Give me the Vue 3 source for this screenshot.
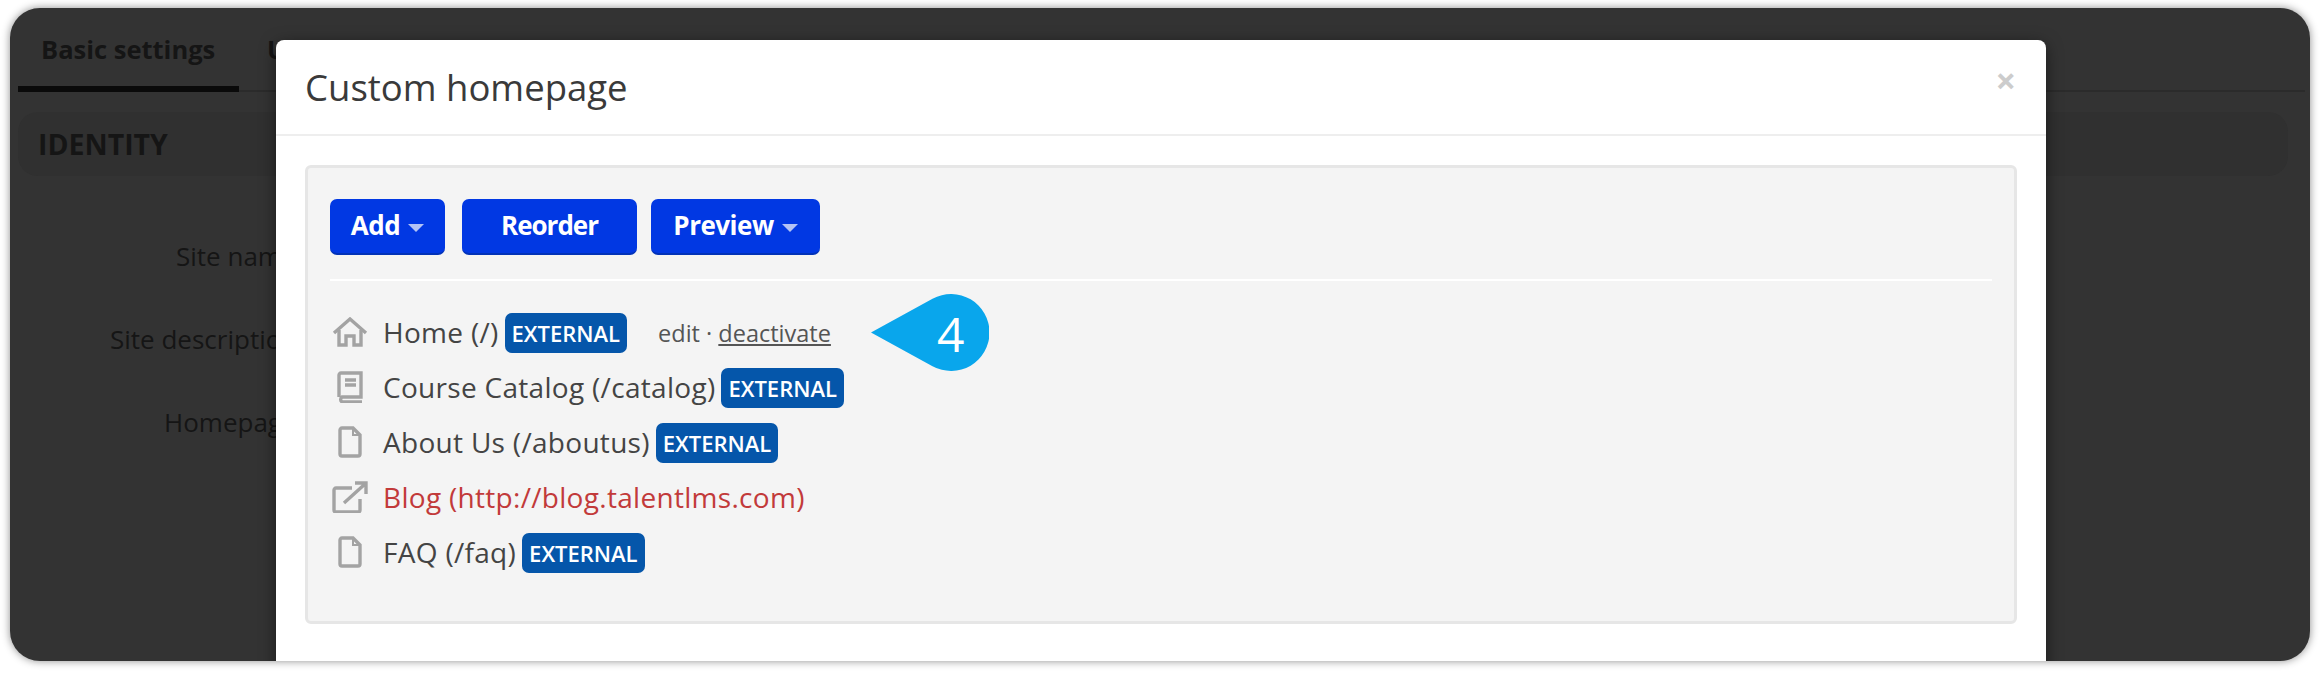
<template>
  <div class="page">
    <div class="frame">
      <div class="bg">
        <div class="tabs">
          <div class="tab active">Basic settings</div>
          <div class="tab">Users</div>
        </div>
        <div class="section">IDENTITY</div>
        <div class="form">
          <div v-for="label in labels" :key="label" class="form-label">{{ label }}</div>
        </div>
      </div>

      <div class="modal">
        <div class="modal-head">
          <span class="modal-title">Custom homepage</span>
          <span class="close">×</span>
        </div>
        <div class="modal-body">
          <div class="well">
            <div class="toolbar">
              <button class="btn btn-add">Add<i class="caret"></i></button>
              <button class="btn btn-reorder">Reorder</button>
              <button class="btn btn-preview">Preview<i class="caret"></i></button>
            </div>
            <ul class="pages">
              <li v-for="p in pages" :key="p.name" class="page-row">
                <span class="icon">
                  <svg v-if="p.icon === 'home'" width="36" height="30" viewBox="0 0 36 30" fill="none" stroke="#a3a3a3" stroke-width="3.4">
                    <path d="M2 16 18 2l16 14" />
                    <path d="M7 13v15h7v-9h8v9h7V13" />
                  </svg>
                  <svg v-else-if="p.icon === 'book'" width="28" height="32" viewBox="0 0 28 32" fill="none" stroke="#a3a3a3" stroke-width="3.4">
                    <path d="M3 26V4a2 2 0 0 1 2-2h20v24H6a3 3 0 0 0 0 5h20" />
                    <path d="M9 9h11M9 14h11" />
                  </svg>
                  <svg v-else-if="p.icon === 'file'" width="24" height="32" viewBox="0 0 24 32" fill="none" stroke="#a3a3a3" stroke-width="3.4">
                    <path d="M15 2H4a2 2 0 0 0-2 2v24a2 2 0 0 0 2 2h16a2 2 0 0 0 2-2V9z" />
                    <path d="M15 2v7h7" stroke-width="2" />
                  </svg>
                  <svg v-else width="36" height="32" viewBox="0 0 36 32" fill="none" stroke="#a3a3a3" stroke-width="3.4">
                    <path d="M20 7H4a2 2 0 0 0-2 2v20a2 2 0 0 0 2 2h22a2 2 0 0 0 2-2V18" />
                    <path d="M12 22 33 3M23 2h11v11" />
                  </svg>
                </span>
                <span class="name" :class="{ red: p.red }">{{ p.name }}</span>
                <span v-if="!p.red" class="badge">EXTERNAL</span>
                <span v-if="p.actions" class="actions">edit · <u>deactivate</u></span>
                <span v-if="p.actions" class="callout">
                  <svg width="118" height="77" viewBox="0 0 118 77">
                    <path d="M0 38.5 61.5 4.75A38.5 38.5 0 1 1 61.5 72.25z" fill="#09a6ec" />
                  </svg>
                  <span class="callout-num">4</span>
                </span>
              </li>
            </ul>
          </div>
        </div>
      </div>
    </div>
  </div>
</template>

<script setup>
const labels = ['Site name', 'Site description', 'Homepage']

const pages = [
  { name: 'Home (/)', icon: 'home', actions: true },
  { name: 'Course Catalog (/catalog)', icon: 'book' },
  { name: 'About Us (/aboutus)', icon: 'file' },
  { name: 'Blog (http://blog.talentlms.com)', icon: 'link', red: true },
  { name: 'FAQ (/faq)', icon: 'file' },
]
</script>

<style>
html, body {
  margin: 0;
  background: #fff;
}
</style>

<style scoped>
.page {
  width: 2320px;
  height: 673px;
  padding: 8px 10px 12px;
  box-sizing: border-box;
  font-family: "Open Sans", sans-serif;
  overflow: hidden;
}
.frame {
  position: relative;
  height: 653px;
  border-radius: 30px;
  overflow: hidden;
  background: #333;
  box-shadow: 0 0 8px rgba(0, 0, 0, 0.45);
}
.bg {
  color: #151515;
}
.tabs {
  display: flex;
  height: 82px;
  margin: 0 5px 0 8px;
  border-bottom: 2px solid #2b2b2b;
}
.tab {
  padding: 24px 0 0 28px;
  font-size: 25.5px;
  font-weight: 700;
}
.tab.active {
  box-sizing: border-box;
  width: 221px;
  padding-left: 23px;
  border-bottom: 6px solid #0a0a0a;
  margin-bottom: -2px;
}
.section {
  margin: 20px 22px 0 8px;
  height: 64px;
  line-height: 64px;
  padding-left: 20px;
  font-size: 28.5px;
  font-weight: 700;
  background: #303030;
  border-radius: 20px;
}
.form {
  width: 266px;
  padding-top: 62px;
}
.form-label {
  height: 83px;
  line-height: 36px;
  font-size: 26px;
  white-space: nowrap;
  text-align: left;
}
.form-label:nth-child(1) { padding-left: 166px; }
.form-label:nth-child(2) { padding-left: 100px; }
.form-label:nth-child(3) { padding-left: 154px; }

.modal {
  position: absolute;
  left: 266px;
  top: 32px;
  width: 1770px;
  height: 640px;
  background: #fff;
  border-radius: 8px 8px 0 0;
  box-shadow: 0 4px 16px rgba(0, 0, 0, 0.5);
}
.modal-head {
  display: flex;
  align-items: center;
  justify-content: space-between;
  height: 94px;
  padding: 0 30px 0 29px;
  border-bottom: 2px solid #eee;
}
.modal-title {
  font-size: 36.5px;
  font-weight: 500;
  color: #3a3a3a;
}
.close {
  margin-bottom: 14px;
  font-size: 36px;
  font-weight: 700;
  color: #ccc;
}
.modal-body {
  padding: 29px 29px 0;
}
.well {
  height: 459px;
  box-sizing: border-box;
  padding: 31px 22px 0;
  background: #f4f4f4;
  border: 3px solid #e6e6e6;
  border-radius: 6px;
}
.toolbar {
  display: flex;
  padding-bottom: 24px;
  border-bottom: 2px solid #fff;
}
.btn {
  height: 56px;
  padding: 0 0 3px;
  border: 0;
  border-bottom: 2px solid #0232b8;
  border-radius: 7px;
  background: #0138e3;
  color: #fff;
  font-family: inherit;
  font-size: 26px;
  font-weight: 700;
  letter-spacing: -0.5px;
}
.btn-add { width: 115px; }
.btn-reorder { width: 175px; margin-left: 17px; letter-spacing: -1px; }
.btn-preview { width: 169px; margin-left: 14px; }
.caret {
  display: inline-block;
  margin-left: 8px;
  vertical-align: middle;
  border-top: 8px solid #b3c3f5;
  border-left: 8px solid transparent;
  border-right: 8px solid transparent;
}
.pages {
  margin: 23px 0 0;
  padding: 0;
  list-style: none;
}
.page-row {
  display: flex;
  align-items: center;
  height: 55px;
  color: #444;
  font-size: 28px;
}
.icon {
  display: flex;
  justify-content: center;
  width: 40px;
  margin-right: 13px;
}
.name {
  font-weight: 500;
  letter-spacing: 0.3px;
}
.name.red {
  color: #c23a3a;
}
.badge {
  margin: 3px 0 0 6px;
  padding: 0 7px;
  height: 40px;
  line-height: 40px;
  background: #0556aa;
  border-radius: 7px;
  color: #fff;
  font-size: 22px;
  font-weight: 600;
}
.actions {
  margin: 3px 0 0 31px;
  font-size: 23.5px;
  color: #555;
}
.callout {
  position: relative;
  display: flex;
  margin-left: 40px;
  top: 1px;
}
.callout-num {
  position: absolute;
  left: 66px;
  top: 11px;
  color: #fff;
  font-size: 48px;
  line-height: 58px;
}
</style>
